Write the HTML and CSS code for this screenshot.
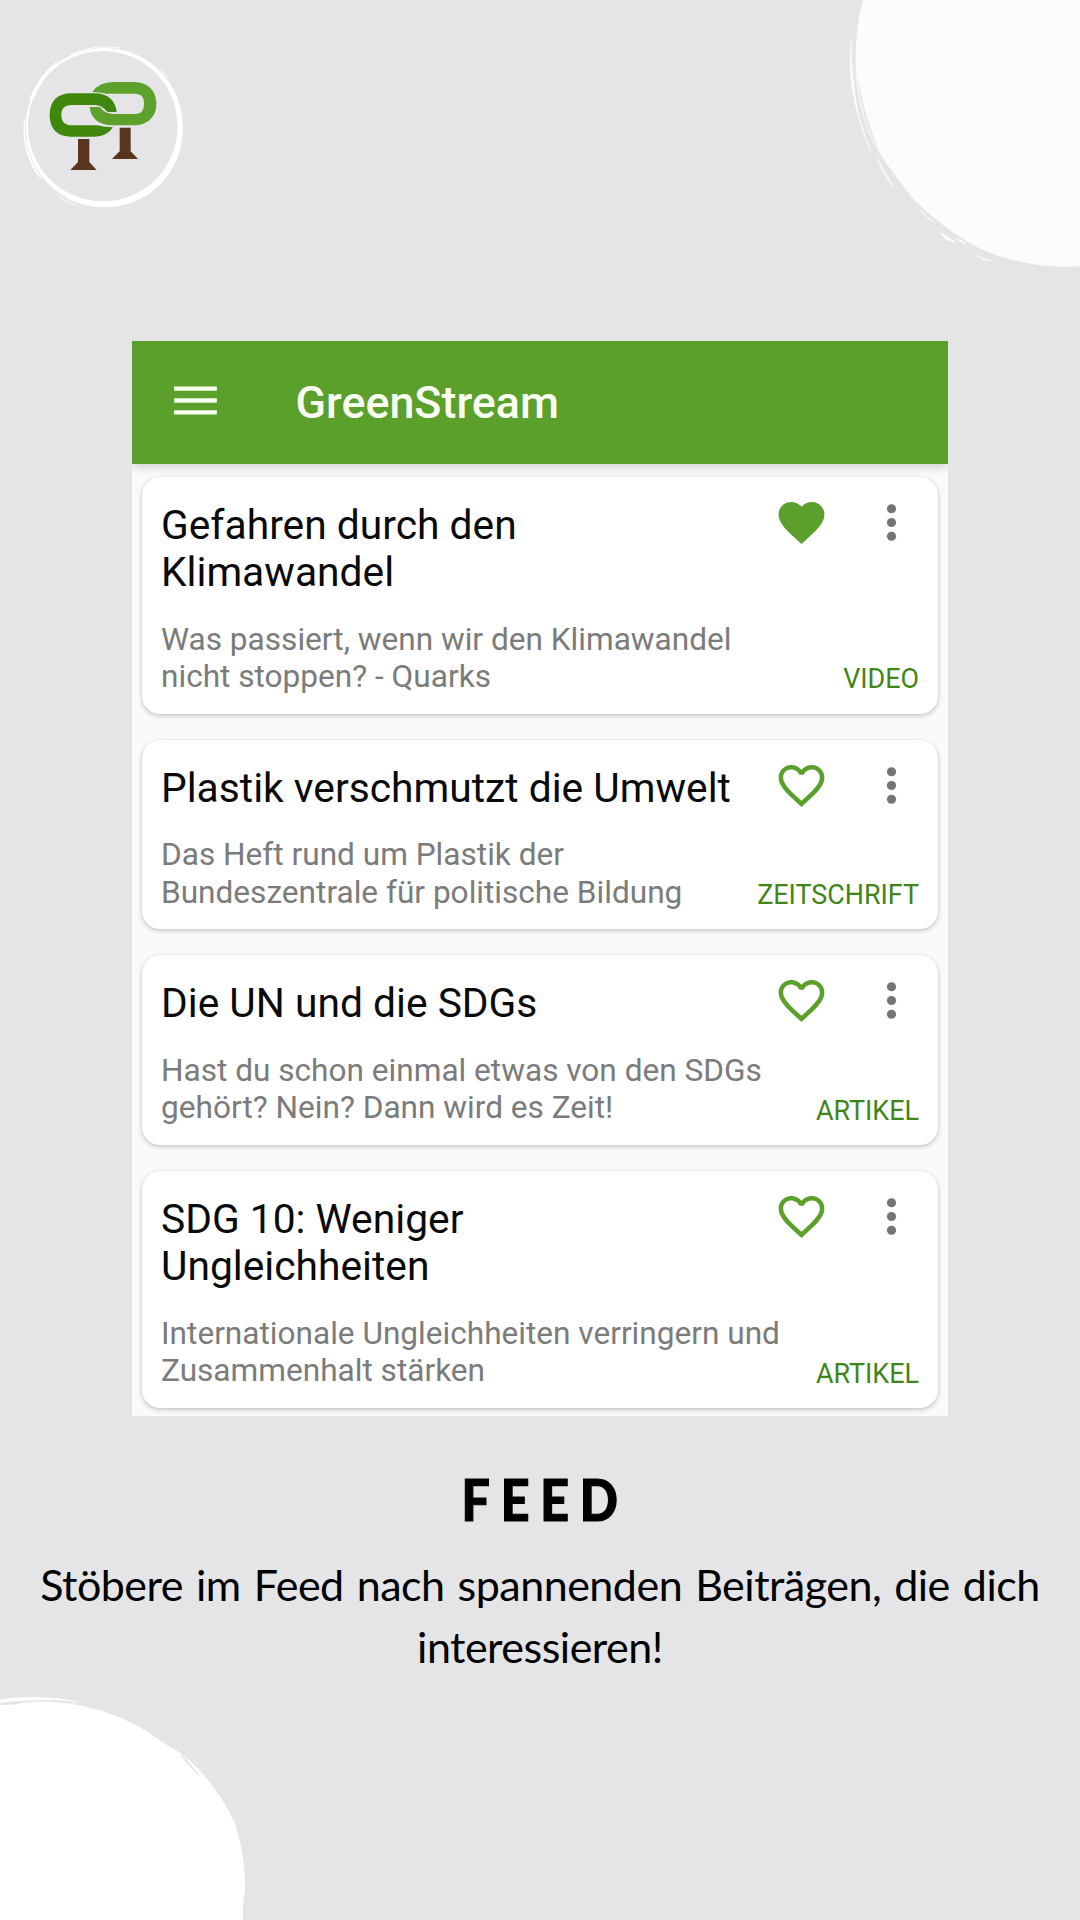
FILE: index.html
```html
<!DOCTYPE html>
<html lang="de">
<head>
<meta charset="utf-8">
<title>GreenStream – Feed</title>
<link rel="stylesheet" href="styles.css">
</head>
<body>
<svg width="0" height="0" class="defs" aria-hidden="true">
  <symbol id="heart" viewBox="0 0 24 24"><path d="M12 21.35l-1.45-1.32C5.4 15.36 2 12.28 2 8.5 2 5.42 4.42 3 7.5 3c1.74 0 3.41.81 4.5 2.09C13.09 3.81 14.76 3 16.5 3 19.58 3 22 5.42 22 8.5c0 3.78-3.4 6.86-8.55 11.54L12 21.35z"/></symbol>
  <symbol id="heart-outline" viewBox="0 0 24 24"><path d="M16.5 3c-1.74 0-3.41.81-4.5 2.09C10.91 3.81 9.24 3 7.5 3 4.42 3 2 5.42 2 8.5c0 3.78 3.4 6.86 8.55 11.54L12 21.35l1.45-1.32C18.6 15.36 22 12.28 22 8.5 22 5.42 19.58 3 16.5 3zm-4.4 15.55l-.1.1-.1-.1C7.14 14.24 4 11.39 4 8.5 4 6.5 5.5 5 7.5 5c1.54 0 3.04.99 3.57 2.36h1.87C13.46 5.99 14.96 5 16.5 5c2 0 3.5 1.5 3.5 3.5 0 2.89-3.14 5.74-7.9 10.05z"/></symbol>
  <symbol id="more" viewBox="0 0 24 24"><circle cx="12" cy="6" r="2"/><circle cx="12" cy="12" r="2"/><circle cx="12" cy="18" r="2"/></symbol>
</svg>

<svg class="logo" viewBox="0 0 570 570" role="img" aria-label="GreenStream Logo">
  <path fill="#fff" fill-rule="evenodd" d="M283 54C414 54 519 158 519 292C519 428 418 532 283 532C152 532 48 426 48 292C48 158 152 54 283 54ZM279 63C153 63 54 164 54 288C54 412 154 514 279 514C402 514 503 414 503 288C503 164 402 63 279 63Z"/>
  <g fill="none" stroke="#fff" stroke-linecap="round">
    <path stroke-width="5" d="M62 204C80 160 108 124 140 98M44 270C38 340 58 400 92 443"/>
    <path stroke-width="3" d="M70 206C88 160 118 122 152 98M180 74C230 52 280 46 328 54M50 330C58 380 76 414 100 440M144 496C160 510 178 520 197 526M160 495C176 508 190 514 206 518M452 120L478 146"/>
  </g>
  <path fill="#59351f" d="M204 327H238V396L260 420H181L204 396ZM329 293H362V364L384 387H306L329 364Z"/>
  <path fill="#5ca12b" d="M247 186Q267 156 310 156H370C412 156 439 181 439 221S412 286 370 286H308C267 286 242 265 239 231H270Q282 250 310 252H370C392 252 402 245 402 221S392 191 370 191H290Q270 186 247 186Z"/>
  <path fill="#3f880d" d="M184 190H254C295 190 317 214 320 246H292Q276 225 254 225H188C164 225 154 235 154 255S164 286 188 286H262Q283 292 309 292Q292 320 254 320H184C142 320 119 297 119 255S142 190 184 190Z"/>
  <path fill="none" stroke="#e5e5e7" stroke-width="3" d="M240 229H268Q276 232 282 241Q289 248 300 248H322"/>
</svg>

<svg class="blob blob-top" viewBox="0 0 750 840" aria-hidden="true">
  <path d="M100 0C84 50 77 120 77 180C78 290 105 390 150 460C180 510 215 550 245 592C300 650 380 710 440 740C530 783 620 800 705 800L750 799V0Z"/>
  <path d="M65 105C52 190 60 320 126 462C126 450 90 380 78 300C72 250 62 200 65 105ZM135 458C150 505 170 535 194 570C188 550 160 510 135 458ZM243 598C270 635 290 655 320 672C300 655 270 635 243 598ZM334 697C338 715 355 725 380 728C362 718 350 708 334 697ZM374 714L412 738L396 720ZM436 765C452 777 470 784 488 783Z"/>
  <path class="gap" d="M84 232C88 310 108 385 150 458C125 400 100 330 84 232ZM78 270C80 310 92 350 107 378C92 340 86 310 84 270ZM168 490Q180 520 200 540Q182 518 168 490ZM270 624Q295 650 325 672Q300 645 270 624Z"/>
</svg>

<svg class="blob blob-bottom" viewBox="0 0 780 720" aria-hidden="true">
  <path d="M0 58C80 46 170 50 238 65L220 73C310 88 380 118 440 154L515 204L524 208L550 226C600 265 660 335 705 430C730 510 736 570 735 630Q730 665 729 680V720H0Z"/>
  <path class="gap" d="M0 68C70 61 160 55 232 66Q225 71 210 71C160 64 110 64 65 68Q65 74 0 75ZM548 226L606 294Q575 270 540 224Z"/>
</svg>

<main class="page">
  <section class="app">
    <header class="bar">
      <svg class="menu" viewBox="0 0 24 24"><path d="M3 17.9h18v-1.8H3zM3 12.9h18v-1.8H3zM3 7.9h18v-1.8H3z"/></svg>
      <h1 class="brand">GreenStream</h1>
    </header>
    <div class="feed">
      <article class="card">
        <div class="head"><h2 class="title">Gefahren durch den<br>Klimawandel</h2><div class="actions"><svg class="icon like"><use href="#heart"/></svg><svg class="icon more"><use href="#more"/></svg></div></div>
        <div class="foot"><p class="desc">Was passiert, wenn wir den Klimawandel<br>nicht stoppen? - Quarks</p><span class="tag">VIDEO</span></div>
      </article>
      <article class="card">
        <div class="head"><h2 class="title">Plastik verschmutzt die Umwelt</h2><div class="actions"><svg class="icon like"><use href="#heart-outline"/></svg><svg class="icon more"><use href="#more"/></svg></div></div>
        <div class="foot"><p class="desc">Das Heft rund um Plastik der<br>Bundeszentrale für politische Bildung</p><span class="tag">ZEITSCHRIFT</span></div>
      </article>
      <article class="card">
        <div class="head"><h2 class="title">Die UN und die SDGs</h2><div class="actions"><svg class="icon like"><use href="#heart-outline"/></svg><svg class="icon more"><use href="#more"/></svg></div></div>
        <div class="foot"><p class="desc">Hast du schon einmal etwas von den SDGs<br>gehört? Nein? Dann wird es Zeit!</p><span class="tag">ARTIKEL</span></div>
      </article>
      <article class="card">
        <div class="head"><h2 class="title">SDG 10: Weniger<br>Ungleichheiten</h2><div class="actions"><svg class="icon like"><use href="#heart-outline"/></svg><svg class="icon more"><use href="#more"/></svg></div></div>
        <div class="foot"><p class="desc">Internationale Ungleichheiten verringern und<br>Zusammenhalt stärken</p><span class="tag">ARTIKEL</span></div>
      </article>
    </div>
  </section>
  <h2 class="headline">FEED</h2>
  <p class="caption">Stöbere im Feed nach spannenden Beiträgen, die dich<br>interessieren!</p>
</main>
</body>
</html>
```
FILE: styles.css
```css
* { box-sizing: border-box; }
body {
  margin: 0;
  width: 1080px;
  height: 1920px;
  position: relative;
  overflow: hidden;
  background: #e5e5e7;
  color: #000;
  font-family: Roboto, "Liberation Sans", sans-serif;
}
h1, h2, p { margin: 0; font-weight: 400; }
svg { display: block; }
.defs { position: absolute; }

.logo { position: absolute; left: 10px; top: 30px; width: 190px; height: 190px; }
.blob { position: absolute; }
.blob-top { right: 0; top: 0; width: 250px; height: 280px; fill: #fcfcfa; }
.blob-bottom { left: 0; bottom: 0; width: 260px; height: 240px; fill: #fff; }
.blob .gap { fill: #e5e5e7; }

.page {
  display: flex;
  flex-direction: column;
  align-items: center;
  padding-top: 341px;
}
.app {
  width: 816px;
  height: 1075px;
  background: #fafafa;
  overflow: hidden;
}
.bar {
  display: flex;
  align-items: center;
  height: 123px;
  padding: 0 35px 4px;
  gap: 71.5px;
  background: #5ba02a;
  box-shadow: 0 2px 10px rgba(0, 0, 0, .2);
}
.menu { width: 57px; height: 57px; fill: #f7ffee; }
.brand {
  padding-top: 4px;
  font-size: 44.8px;
  line-height: 52px;
  font-weight: 500;
  color: #f9fff2;
}
.feed {
  display: flex;
  flex-direction: column;
  gap: 26px;
  padding: 13px 10px 0;
}
.card {
  padding: 25px 19px 18.4px;
  border-radius: 18px;
  background: #fff;
  box-shadow: 0 2px 5px rgba(0, 0, 0, .2), 0 0 2px rgba(0, 0, 0, .08);
}
.head, .foot { display: flex; justify-content: space-between; white-space: nowrap; }
.foot { margin-top: 24.3px; align-items: flex-end; }
.title { font-size: 40.75px; line-height: 47.3px; color: #0a0a0a; }
.desc { font-size: 31.6px; line-height: 37.3px; color: #7b7b7b; }
.actions { display: flex; gap: 35px; height: 47px; margin: -7.2px 0 0; }
.icon { width: 55px; height: 55px; }
.like { fill: #5ba02a; }
.more { fill: #757575; }
.tag { font-size: 26.9px; line-height: 32px; color: #3f8518; }

.headline {
  margin: 49px -10.3px 0 0;
  font: 900 57px/68px Lato, sans-serif;
  letter-spacing: 12.3px;
  transform: scaleX(.88);
  -webkit-text-stroke: 1.2px #000;
}
.caption {
  margin-top: 20.5px;
  font: 400 43px/62.7px Lato, sans-serif;
  letter-spacing: -.5px;
  word-spacing: 2.5px;
  text-align: center;
}
```
